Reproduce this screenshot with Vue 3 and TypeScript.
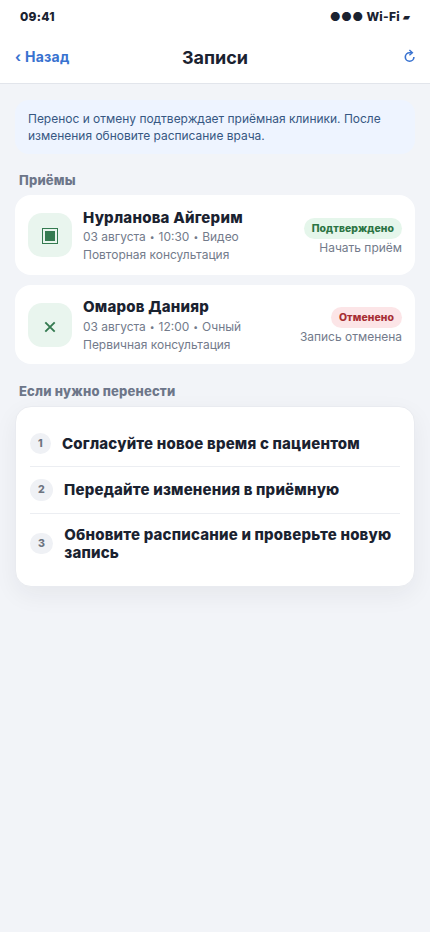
<script setup lang="ts">
interface Appointment {
  icon: 'video' | 'cross'
  name: string
  time: string[]
  kind: string
  status: string
  tone: 'confirmed' | 'cancelled'
  action: string
}

const appointments: Appointment[] = [
  {
    icon: 'video',
    name: 'Нурланова Айгерим',
    time: ['03 августа', '10:30', 'Видео'],
    kind: 'Повторная консультация',
    status: 'Подтверждено',
    tone: 'confirmed',
    action: 'Начать приём',
  },
  {
    icon: 'cross',
    name: 'Омаров Данияр',
    time: ['03 августа', '12:00', 'Очный'],
    kind: 'Первичная консультация',
    status: 'Отменено',
    tone: 'cancelled',
    action: 'Запись отменена',
  },
]

const steps: string[] = [
  'Согласуйте новое время с пациентом',
  'Передайте изменения в приёмную',
  'Обновите расписание и проверьте новую запись',
]
</script>

<template>
  <div class="screen">
    <div class="status-bar">
      <span>09:41</span>
      <span>●●● Wi-Fi <span class="battery">▰</span></span>
    </div>
    <header class="header">
      <button class="link back" type="button">‹ Назад</button>
      <h1 class="title">Записи</h1>
      <button class="link refresh" type="button" aria-label="Обновить">
        <svg width="11" height="14" viewBox="0 0 11 14">
          <path d="M9.9 8a4.3 4.3 0 1 1-4.3-4.3H7.8" fill="none" stroke="currentColor" stroke-width="1.6" />
          <path d="M5.4 1 8.4 3.7 5.4 6.3" fill="none" stroke="currentColor" stroke-width="1.4" />
        </svg>
      </button>
    </header>
    <main class="content">
      <p class="notice">
        Перенос и отмену подтверждает приёмная клиники. После изменения обновите расписание врача.
      </p>

      <h2 class="section">Приёмы</h2>
      <div class="list">
        <article v-for="item in appointments" :key="item.name" class="visit">
          <div class="visit-icon" :class="item.icon">
            <svg v-if="item.icon === 'video'" width="16" height="16" viewBox="0 0 16 16">
              <rect x=".5" y=".5" width="15" height="15" fill="none" stroke="currentColor" />
              <rect x="3" y="3" width="10" height="10" fill="currentColor" />
            </svg>
            <svg v-else width="16" height="16" viewBox="0 0 16 16">
              <path d="m3.3 3.3 9.4 9.4m0-9.4-9.4 9.4" fill="none" stroke="currentColor" stroke-width="1.9" />
            </svg>
          </div>
          <div class="visit-body">
            <h3 class="visit-name">{{ item.name }}</h3>
            <p class="meta">
              <template v-for="(part, i) in item.time" :key="part"><span v-if="i" class="dot">•</span>{{ part }}</template>
            </p>
            <p class="meta">{{ item.kind }}</p>
          </div>
          <div class="visit-side">
            <span class="pill" :class="item.tone">{{ item.status }}</span>
            <span class="action">{{ item.action }}</span>
          </div>
        </article>
      </div>

      <h2 class="section">Если нужно перенести</h2>
      <ol class="steps">
        <li v-for="(step, index) in steps" :key="step" class="step">
          <span class="number">{{ index + 1 }}</span>
          <span class="step-text">{{ step }}</span>
        </li>
      </ol>
    </main>
  </div>
</template>

<style>
body {
  background: #f2f4f8;
}
</style>

<style scoped>
.screen {
  box-sizing: border-box;
  min-height: 100vh;
  background: #f2f4f8;
  color: #1a2230;
  font-family: Inter, "DejaVu Sans", sans-serif;
}
.screen * {
  box-sizing: border-box;
}
.status-bar {
  display: flex;
  align-items: center;
  justify-content: space-between;
  height: 32px;
  padding: 0 20px;
  background: #fff;
  font-size: 12px;
  font-weight: 800;
  letter-spacing: 0.25px;
}
.battery {
  font-size: 9.5px;
  letter-spacing: 0;
  vertical-align: 1px;
  line-height: 1;
}
.header {
  display: grid;
  grid-template-columns: 1fr auto 1fr;
  align-items: center;
  height: 52px;
  padding: 0 15px;
  background: #fff;
  border-bottom: 1px solid #e2e5eb;
}
.title {
  margin: -1px 0 0;
  font-size: 18px;
  font-weight: 700;
}
.link {
  padding: 0;
  border: 0;
  background: none;
  color: #3872d0;
  font: inherit;
  font-size: 14px;
  font-weight: 700;
}
.back {
  justify-self: start;
  margin-top: -2px;
  letter-spacing: 0.28px;
}
.refresh {
  display: flex;
  justify-self: end;
  margin-top: -3px;
}
.content {
  padding: 16px 15px;
}
.notice {
  margin: 0;
  padding: 9.5px 13px 10.5px;
  border-radius: 14px;
  background: #eef4ff;
  color: #365782;
  font-size: 11.98px;
  line-height: 17px;
}
.section {
  margin: 17.1px 4px 6.2px;
  color: #6d7689;
  font-size: 13px;
  font-weight: 800;
  letter-spacing: 0.18px;
  line-height: 18px;
}
.list {
  display: flex;
  flex-direction: column;
  gap: 10px;
}
.visit {
  display: flex;
  align-items: center;
  gap: 11px;
  height: 79.6px;
  padding: 0 13px;
  border-radius: 16px;
  background: #fff;
}
.visit-icon {
  display: flex;
  flex: none;
  align-items: center;
  justify-content: center;
  width: 44px;
  height: 44px;
  border-radius: 14px;
  background: #e9f5ee;
  color: #347a50;
}
.visit-icon.video {
  padding-top: 1px;
}
.visit-icon.cross {
  padding-top: 4px;
}
.visit-body {
  flex: 1;
  padding-top: 3px;
}
.visit-name {
  margin: 0 0 1.4px;
  font-size: 15px;
  font-weight: 800;
  letter-spacing: 0.22px;
  line-height: 18px;
}
.meta {
  margin: 0;
  color: #737b8b;
  font-size: 11.97px;
  line-height: 18px;
}
.dot {
  padding: 0 4px;
  font-size: 8.5px;
  line-height: 1;
  vertical-align: 1px;
}
.visit-side {
  display: flex;
  flex-direction: column;
  align-items: flex-end;
  padding-top: 3px;
}
.pill {
  padding: 0 8px;
  border-radius: 10.5px;
  font-size: 10.4px;
  font-weight: 800;
  letter-spacing: 0.1px;
  line-height: 21px;
}
.confirmed {
  background: #e5f6eb;
  color: #2c7443;
}
.cancelled {
  background: #fce5e7;
  color: #a82f34;
}
.action {
  color: #737b8b;
  font-size: 11.97px;
  line-height: 17px;
}
.steps {
  margin: 0;
  padding: 13.9px 14px 12.9px;
  border: 1px solid #e9ebf0;
  border-radius: 16px;
  background: #fff;
  box-shadow: 0 8px 24px rgba(26, 34, 51, 0.06);
  list-style: none;
}
.step {
  display: flex;
  align-items: center;
  gap: 11px;
  padding: 12px 0;
}
.step + .step {
  border-top: 1px solid #eceef2;
}
.number {
  flex: none;
  padding: 0 8px;
  border-radius: 11px;
  background: #eff1f5;
  color: #6d7480;
  font-size: 10.6px;
  font-weight: 800;
  letter-spacing: 0.3px;
  line-height: 21.6px;
}
.step-text {
  font-size: 15px;
  font-weight: 800;
  letter-spacing: 0.19px;
  line-height: 17.7px;
}
</style>
